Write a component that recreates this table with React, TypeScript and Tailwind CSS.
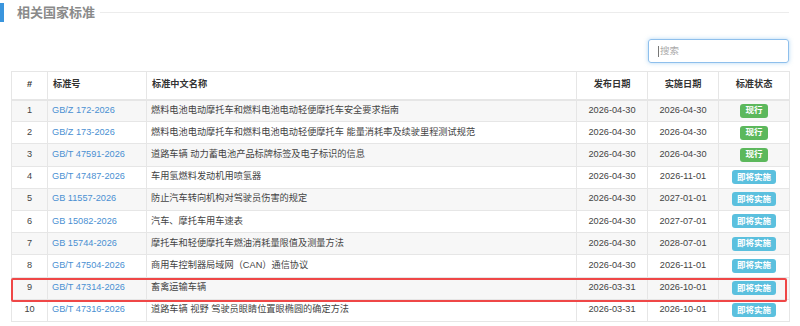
const rows = [
  { no: 'GB/Z 172-2026', name: '燃料电池电动摩托车和燃料电池电动轻便摩托车安全要求指南', pub: '2026-04-30', impl: '2026-04-30', status: '现行' },
  { no: 'GB/Z 173-2026', name: '燃料电池电动摩托车和燃料电池电动轻便摩托车 能量消耗率及续驶里程测试规范', pub: '2026-04-30', impl: '2026-04-30', status: '现行' },
  { no: 'GB/T 47591-2026', name: '道路车辆 动力蓄电池产品标牌标签及电子标识的信息', pub: '2026-04-30', impl: '2026-04-30', status: '现行' },
  { no: 'GB/T 47487-2026', name: '车用氢燃料发动机用喷氢器', pub: '2026-04-30', impl: '2026-11-01', status: '即将实施' },
  { no: 'GB 11557-2026', name: '防止汽车转向机构对驾驶员伤害的规定', pub: '2026-04-30', impl: '2027-01-01', status: '即将实施' },
  { no: 'GB 15082-2026', name: '汽车、摩托车用车速表', pub: '2026-04-30', impl: '2027-07-01', status: '即将实施' },
  { no: 'GB 15744-2026', name: '摩托车和轻便摩托车燃油消耗量限值及测量方法', pub: '2026-04-30', impl: '2028-07-01', status: '即将实施' },
  { no: 'GB/T 47504-2026', name: '商用车控制器局域网（CAN）通信协议', pub: '2026-04-30', impl: '2026-11-01', status: '即将实施' },
  { no: 'GB/T 47314-2026', name: '畜禽运输车辆', pub: '2026-03-31', impl: '2026-10-01', status: '即将实施' },
  { no: 'GB/T 47316-2026', name: '道路车辆 视野 驾驶员眼睛位置眼椭圆的确定方法', pub: '2026-03-31', impl: '2026-10-01', status: '即将实施' },
]

const font = { fontFamily: '"Liberation Sans", Arial, "Noto Sans CJK SC", sans-serif' }

export default function App() {
  return (
    <div className="relative w-[800px] h-[326px] overflow-hidden bg-white text-[#333]" style={font}>
      {/* section title */}
      <div className="flex items-center h-[19px] mt-[3px]">
        <div className="w-[4px] h-full bg-[#3a95dd]" />
        <div className="ml-[13px] text-[13px] font-bold text-[#8a8a8a] leading-none">相关国家标准</div>
        <div className="flex-1 ml-[5px] mr-[11px] h-px bg-[#ececec]" />
      </div>

      {/* search */}
      <div className="flex justify-end pr-[11px] mt-[17px]">
        <div className="relative w-[141px] h-[24px] rounded-[3px] border border-[#8ebfec] shadow-[0_0_4px_rgba(102,175,233,0.5)] flex items-center pl-[9px]">
          <span className="w-px h-[11px] bg-[#777] mr-px" />
          <span className="text-[9.5px] text-[#aaa]">搜索</span>
        </div>
      </div>

      {/* table */}
      <div className="mx-[11px] mt-[8px]">
        <table className="table-fixed border-collapse w-[778px] text-[9.2px]">
          <colgroup>
            <col className="w-[36px]" />
            <col className="w-[99px]" />
            <col className="w-[430px]" />
            <col className="w-[71px]" />
            <col className="w-[71px]" />
            <col className="w-[71px]" />
          </colgroup>
          <thead>
            <tr className="h-[28px] font-bold text-[#333]">
              <th className="border border-[#e6e6e6] border-b-2 text-center">#</th>
              <th className="border border-[#e6e6e6] border-b-2 text-left pl-[5px]">标准号</th>
              <th className="border border-[#e6e6e6] border-b-2 text-left pl-[5px]">标准中文名称</th>
              <th className="border border-[#e6e6e6] border-b-2 text-center">发布日期</th>
              <th className="border border-[#e6e6e6] border-b-2 text-center">实施日期</th>
              <th className="border border-[#e6e6e6] border-b-2 text-center">标准状态</th>
            </tr>
          </thead>
          <tbody>
            {rows.map((r, i) => (
              <tr key={r.no} className={`h-[22.2px] ${i % 2 === 0 ? 'bg-[#f7f7f7]' : 'bg-white'}`}>
                <td className="border border-[#e6e6e6] text-center text-[#444]">{i + 1}</td>
                <td className="border border-[#e6e6e6] pl-[4px] text-[#4a8fd2] whitespace-nowrap">{r.no}</td>
                <td className="border border-[#e6e6e6] pl-[4px] text-[#444] whitespace-nowrap">{r.name}</td>
                <td className="border border-[#e6e6e6] text-center text-[#444]">{r.pub}</td>
                <td className="border border-[#e6e6e6] text-center text-[#444]">{r.impl}</td>
                <td className="border border-[#e6e6e6] text-center">
                  <span
                    className={`inline-flex items-center h-[14px] px-[5px] rounded-[3px] text-white font-bold text-[8.5px] align-middle ${
                      r.status === '现行' ? 'bg-[#5cb85c]' : 'bg-[#5bc0de]'
                    }`}
                  >
                    {r.status}
                  </span>
                </td>
              </tr>
            ))}
          </tbody>
        </table>
      </div>

      {/* highlight annotation */}
      <div className="absolute left-[11px] top-[278px] w-[776px] h-[24px] border-2 border-[#ef4747] rounded-[2px]" />
    </div>
  )
}
